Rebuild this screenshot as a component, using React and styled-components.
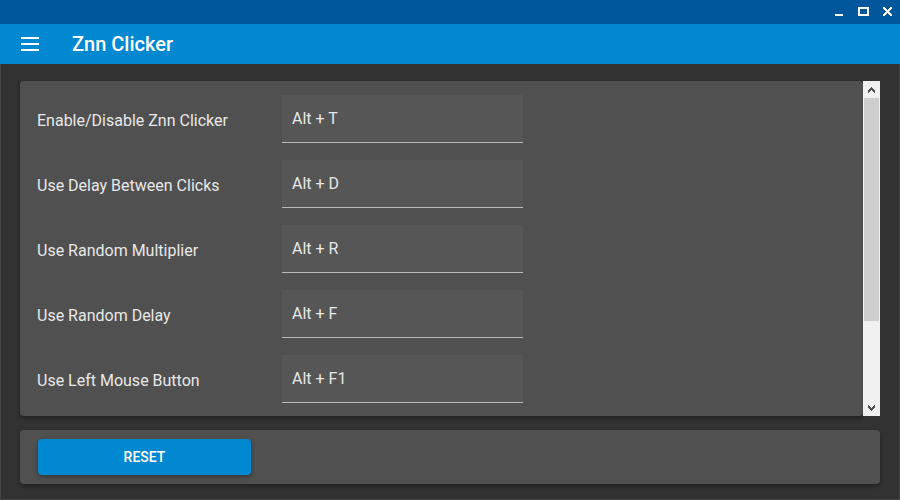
import React from "react";
import styled, { createGlobalStyle } from "styled-components";

const GlobalStyle = createGlobalStyle`
  *, *::before, *::after { box-sizing: border-box; }
  body { margin: 0; background: #323232; }
  button, input { font: inherit; color: inherit; }
`;

const Window = styled.div`
  display: flex;
  flex-direction: column;
  height: 100vh;
  font-family: Roboto, sans-serif;
  font-size: 16px;
  color: #e8e8e8;
`;

const TitleBar = styled.header`
  display: flex;
  flex: none;
  justify-content: flex-end;
  height: 24px;
  background: #00579c;
`;

const IconButton = styled.button`
  display: flex;
  align-items: center;
  justify-content: center;
  width: ${(p) => p.$size}px;
  height: ${(p) => p.$size}px;
  padding: 0;
  border: 0;
  background: none;
  color: #fff;
`;

const AppBar = styled.div`
  display: flex;
  flex: none;
  align-items: center;
  gap: 22px;
  height: 40px;
  padding-left: 10px;
  background: #0288d1;
  color: #fff;
`;

const Title = styled.h1`
  margin: 0;
  font-size: 20px;
  line-height: 24px;
  font-weight: 500;
`;

const Content = styled.main`
  display: flex;
  flex: 1;
  flex-direction: column;
  gap: 14px;
  min-height: 0;
  padding: 17px 19px 15px;
  border: solid #444;
  border-width: 0 1px 1px;
  background: #323232;
`;

const ScrollArea = styled.div`
  display: flex;
  flex: 1;
  min-height: 0;
`;

const Card = styled.section`
  border-radius: 4px;
  background: #505050;
  box-shadow: 0 2px 4px rgba(0, 0, 0, 0.35);
`;

const HotkeyCard = styled(Card)`
  display: flex;
  flex: 1;
  flex-direction: column;
  gap: 17px;
  min-width: 0;
  padding: 14px 17px 0;
  overflow: hidden;
`;

const Row = styled.div`
  display: grid;
  flex: none;
  grid-template-columns: 245px minmax(0, 241px);
`;

const Label = styled.label`
  padding-top: 3px;
  line-height: 45px;
`;

const HotkeyInput = styled.input`
  width: 100%;
  height: 48px;
  padding: 0 10px;
  border: 0;
  border-bottom: 1px solid #b9b9b9;
  border-radius: 0;
  outline: 0;
  background: #565656;
`;

const Scrollbar = styled.div`
  display: flex;
  flex: none;
  flex-direction: column;
  width: 17px;
  background: #f0f0f0;
`;

const ScrollButton = styled(IconButton)`
  flex: none;
  color: #505050;
`;

const Track = styled.div`
  flex: 1;
  padding: 0 1px;
`;

const Thumb = styled.div`
  height: 74%;
  background: #cdcdcd;
`;

const ActionCard = styled(Card)`
  flex: none;
  padding: 9px 18px;
`;

const ResetButton = styled.button`
  display: block;
  width: 213px;
  height: 36px;
  border: 0;
  border-radius: 4px;
  background: #0288d1;
  box-shadow: 0 2px 4px rgba(0, 0, 0, 0.35);
  color: #fff;
  font-size: 14px;
  font-weight: 500;
`;

const hotkeys = [
  { id: "toggle", label: "Enable/Disable Znn Clicker", keys: "Alt + T" },
  { id: "delay", label: "Use Delay Between Clicks", keys: "Alt + D" },
  { id: "multiplier", label: "Use Random Multiplier", keys: "Alt + R" },
  { id: "random", label: "Use Random Delay", keys: "Alt + F" },
  { id: "left", label: "Use Left Mouse Button", keys: "Alt + F1" },
];

const Glyph = ({ size, d, fill = "currentColor" }) => (
  <svg width={size} height={size} viewBox={`0 0 ${size} ${size}`} aria-hidden="true" shapeRendering="crispEdges">
    <path d={d} fill={fill} fillRule="evenodd" />
  </svg>
);

const windowIcons = [
  ["Minimize", "M7 14h8v2H7z"],
  ["Maximize", "M6 7h11v9H6zM8 9v5h7V9z"],
  ["Close", "M7 7h2v1h1v1h1v1h1V9h1V8h1V7h2v2h-1v1h-1v1h-1v1h1v1h1v1h1v2h-2v-1h-1v-1h-1v-1h-1v1h-1v1H9v1H7v-2h1v-1h1v-1h1v-1H9v-1H8V9H7z"],
];

export default function App() {
  return (
    <Window>
      <GlobalStyle />
      <TitleBar>
        {windowIcons.map(([name, d]) => (
          <IconButton key={name} $size={24} type="button" aria-label={name}>
            <Glyph size={24} d={d} />
          </IconButton>
        ))}
      </TitleBar>
      <AppBar>
        <IconButton $size={40} type="button" aria-label="Menu">
          <Glyph size={24} d="M3 5h18v2H3zM3 11h18v2H3zM3 17h18v2H3z" />
        </IconButton>
        <Title>Znn Clicker</Title>
      </AppBar>
      <Content>
        <ScrollArea>
          <HotkeyCard>
            {hotkeys.map(({ id, label, keys }) => (
              <Row key={id}>
                <Label htmlFor={id}>{label}</Label>
                <HotkeyInput id={id} type="text" defaultValue={keys} readOnly />
              </Row>
            ))}
          </HotkeyCard>
          <Scrollbar>
            <ScrollButton $size={17} type="button" aria-label="Scroll up">
              <Glyph size={17} d="M8 6h1v1h1v1h1v1h1v3h-1v-1h-1v-1H9V9H8v1H7v1H6v1H5V9h1V8h1V7h1z" />
            </ScrollButton>
            <Track>
              <Thumb />
            </Track>
            <ScrollButton $size={17} type="button" aria-label="Scroll down">
              <Glyph size={17} d="M8 12h1v-1h1v-1h1V9h1V6h-1v1h-1v1H9v1H8V8H7V7H6V6H5v3h1v1h1v1h1z" />
            </ScrollButton>
          </Scrollbar>
        </ScrollArea>
        <ActionCard>
          <ResetButton type="button">RESET</ResetButton>
        </ActionCard>
      </Content>
    </Window>
  );
}
